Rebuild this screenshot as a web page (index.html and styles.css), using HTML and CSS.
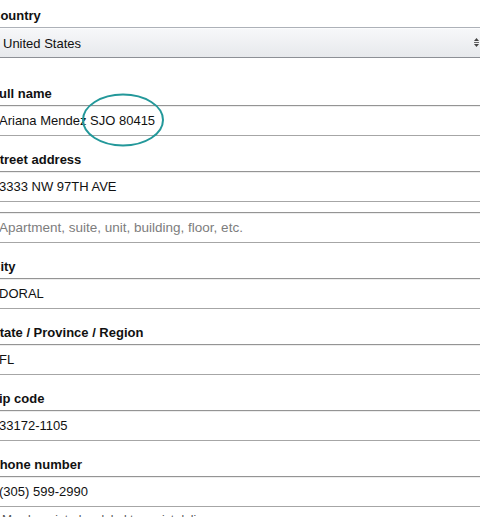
FILE: index.html
```html
<!DOCTYPE html>
<html lang="en">
<head>
<meta charset="utf-8">
<title>Address form</title>
<link rel="stylesheet" href="styles.css">
</head>
<body>
<div class="page">
  <form class="form">
    <div class="field field-country">
      <label class="label">Country</label>
      <div class="dropdown">
        <span class="dropdown-text">United States</span>
        <svg class="dropdown-arrow" width="5" height="9" viewBox="0 0 5 9" aria-hidden="true">
          <polygon points="0,3 2.5,0 5,3" fill="#444"/>
          <rect x="0" y="4" width="5" height="1" fill="#666"/>
          <polygon points="0,6 5,6 2.5,9" fill="#444"/>
        </svg>
      </div>
    </div>

    <div class="field">
      <label class="label">Full name</label>
      <input class="input" type="text" value="Ariana Mendez SJO 80415">
    </div>

    <div class="field field-tight">
      <label class="label">Street address</label>
      <input class="input" type="text" value="3333 NW 97TH AVE">
    </div>

    <div class="field">
      <input class="input input-apt" type="text" placeholder="Apartment, suite, unit, building, floor, etc.">
    </div>

    <div class="field">
      <label class="label">City</label>
      <input class="input" type="text" value="DORAL">
    </div>

    <div class="field">
      <label class="label">State / Province / Region</label>
      <input class="input" type="text" value="FL">
    </div>

    <div class="field">
      <label class="label">Zip code</label>
      <input class="input" type="text" value="33172-1105">
    </div>

    <div class="field field-last">
      <label class="label">Phone number</label>
      <input class="input" type="text" value="(305) 599-2990">
      <div class="hint">May be printed on label to assist delivery.</div>
    </div>
  </form>

  <svg class="annotation" width="86" height="56" viewBox="0 0 86 56" aria-hidden="true">
    <ellipse cx="42" cy="27" rx="40" ry="25.5" fill="none" stroke="#23989a" stroke-width="2"/>
  </svg>
</div>
</body>
</html>
```

FILE: styles.css
```css
html, body {
  margin: 0;
  padding: 0;
  background: #fff;
}

body {
  font-family: "Liberation Sans", Arial, sans-serif;
  font-size: 13px;
  line-height: 19px;
  color: #111;
  overflow: hidden;
  width: 480px;
  height: 517px;
}

.page {
  position: relative;
  width: 480px;
  height: 517px;
  overflow: hidden;
}

.form {
  margin: 0 0 0 -9px;
  padding-top: 6px;
  width: 500px;
  display: flex;
  flex-direction: column;
}

.field {
  display: flex;
  flex-direction: column;
  margin-bottom: 14px;
}

.field-country {
  margin-bottom: 26px;
}

.field-tight {
  margin-bottom: 10px;
}

.field-last {
  margin-bottom: 0;
}

.label {
  display: block;
  font-weight: 700;
  font-size: 13px;
  line-height: 19px;
  padding-bottom: 2px;
  color: #111;
}

.input {
  box-sizing: border-box;
  height: 31px;
  width: 100%;
  margin: 0;
  padding: 3px 7px;
  border: 1px solid #a6a6a6;
  border-top-color: #949494;
  border-radius: 3px;
  background: #fff;
  box-shadow: 0 1px 0 rgba(255, 255, 255, 0.5), inset 0 1px 0 rgba(0, 0, 0, 0.07);
  font-family: "Liberation Sans", Arial, sans-serif;
  font-size: 13px;
  color: #111;
  outline: none;
}

.input-apt {
  font-size: 13.5px;
}

.input::placeholder {
  color: #7d7d7d;
  opacity: 1;
}

.dropdown {
  box-sizing: border-box;
  height: 31px;
  display: flex;
  align-items: center;
  justify-content: space-between;
  padding: 0 11px 0 11px;
  border: 1px solid #adb1b8;
  border-color: #adb1b8 #a2a6ac #8d9096;
  border-radius: 3px;
  background: linear-gradient(to bottom, #f7f8fa, #e7e9ec);
  box-shadow: inset 0 1px 0 rgba(255, 255, 255, 0.6);
}

.dropdown-text {
  line-height: 19px;
  padding-top: 1px;
  color: #111;
}

.dropdown-arrow {
  display: block;
  flex: none;
}

.hint {
  margin-top: 4px;
  font-size: 12px;
  line-height: 18px;
  color: #555;
  padding-left: 11px;
}

.annotation {
  position: absolute;
  left: 81px;
  top: 93px;
}
```
